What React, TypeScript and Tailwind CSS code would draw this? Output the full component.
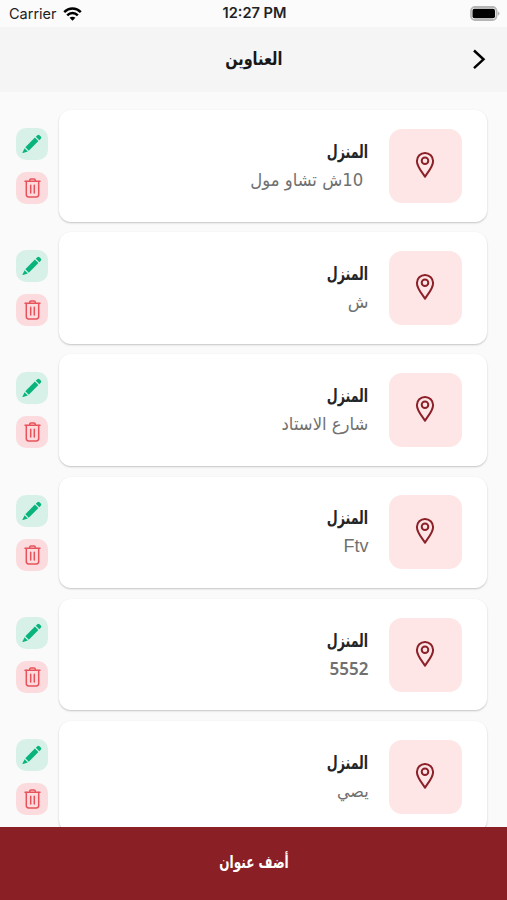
import React from "react";

const addresses = [
  { id: 1, title: "المنزل", detail: "10ش تشاو مول", detailClass: "text-[17.5px] mr-[5px] scale-x-[.94]" },
  { id: 2, title: "المنزل", detail: "ش", detailClass: "text-[17px]" },
  { id: 3, title: "المنزل", detail: "شارع الاستاد", detailClass: "text-[17.5px] scale-x-[.94]" },
  { id: 4, title: "المنزل", detail: "Ftv", detailClass: "text-[18px] font-['Liberation_Sans',sans-serif]" },
  { id: 5, title: "المنزل", detail: "5552", detailClass: "text-[17px] font-semibold font-['Noto_Sans',sans-serif]" },
  { id: 6, title: "المنزل", detail: "يصي", detailClass: "text-[17px] scale-x-[.94]" },
];

function StatusBar() {
  return (
    <div className="grid grid-cols-3 items-center h-[27px] shrink-0 bg-[#fbfbfb] pl-[9px] pr-[7px] font-['Inter',sans-serif] text-[#222]">
      <div className="flex items-center gap-[6px] text-[14.5px]">
        <span>Carrier</span>
        <svg width="19" height="14" viewBox="0 0 19 14" fill="none" stroke="#000" strokeWidth="2.5">
          <path d="M1.2 5.2C6 .4 13 .4 17.8 5.2" />
          <path d="M4.2 8.3c3-3 7.6-3 10.6 0" />
          <path d="M9.5 13.7 6.6 10.8c1.6-1.5 4.2-1.5 5.8 0z" fill="#000" stroke="none" />
        </svg>
      </div>
      <div className="text-center text-[14.6px] font-semibold whitespace-nowrap">12:27 PM</div>
      <div className="flex justify-end">
        <svg width="31" height="15" viewBox="0 0 31 15">
          <rect x="2" y="1" width="25.5" height="13" rx="4" fill="#fbfbfb" stroke="#b5b5b5" strokeWidth="1.8" />
          <rect x="3.500" y="2.800" width="22.500" height="9.400" rx="2" fill="#000" />
          <path d="M28.7 5.300c2.4 1 2.4 3.400 0 4.400z" fill="#b5b5b5" />
        </svg>
      </div>
    </div>
  );
}

function PinIcon() {
  return (
    <svg width="20" height="28" viewBox="0 0 20 28" fill="none" stroke="#8b2028" strokeWidth="2" strokeLinejoin="round">
      <path d="M10 25.600C7.500 21.600 1.900 15.800 1.900 10a8.100 8.100 0 0 1 16.200 0c0 5.800-5.600 11.600-8.100 15.600z" />
      <circle cx="10" cy="9.800" r="3.300" />
    </svg>
  );
}

function PencilIcon() {
  return (
    <svg width="20" height="20" viewBox="0 0 20 20" fill="#08b37c">
      <path d="M3.300 13.200 12.900 3.600l3.500 3.500L6.800 16.700z" />
      <path d="M2.600 14.200 5.800 17.400 1 18.900q-.7.200-.5-.5z" />
      <path d="m13.800 2.700 1.500-1.500q1.100-1 2.200 0l1.300 1.300q1 1.100 0 2.200l-1.500 1.500z" />
    </svg>
  );
}

function TrashIcon() {
  return (
    <svg width="17" height="20" viewBox="0 0 17 20" fill="none" stroke="#e8535b" strokeWidth="1.500" strokeLinecap="round" strokeLinejoin="round">
      <path d="M1 3.300h15" />
      <path d="M5.700 3.100V2.300Q5.700 1 7 1h3q1.300 0 1.300 1.300v.8" />
      <path d="M2.300 3.600v12.900q0 2.400 2.400 2.400h7.600q2.400 0 2.400-2.400V3.600" />
      <path d="M6.700 7.200v7.800M10.300 7.200v7.800" />
    </svg>
  );
}

function AddressRow({ title, detail, detailClass }: { title: string; detail: string; detailClass: string }) {
  return (
    <div className="flex items-start gap-[11px] h-[111.500px] shrink-0">
      <div className="flex items-center gap-5 w-[428px] h-[111.500px] pr-[25px] bg-white rounded-xl shadow-[0_1px_2px_rgba(0,0,0,0.22)]">
        <div className="flex items-center justify-center w-[73.500px] h-[74px] pb-[2px] rounded-[13px] bg-[#fee6e7]">
          <PinIcon />
        </div>
        <div className="flex flex-col items-start">
          <p className="h-7 leading-7 text-[18px] font-bold text-[#252525] origin-right scale-x-[.7]">{title}</p>
          <p className={`h-7 leading-7 text-[#707070] whitespace-nowrap origin-right ${detailClass}`}>{detail}</p>
        </div>
      </div>
      <div className="flex flex-col gap-3 pt-[18px]">
        <button className="flex items-center justify-center w-8 h-8 rounded-[10px] bg-[#d7f1e8]">
          <PencilIcon />
        </button>
        <button className="flex items-center justify-center w-8 h-8 rounded-[10px] bg-[#fbdbdd]">
          <TrashIcon />
        </button>
      </div>
    </div>
  );
}

export default function App() {
  return (
    <div className="flex flex-col w-full h-screen overflow-hidden bg-[#fafafa] font-['DejaVu_Sans',sans-serif]">
      <StatusBar />
      <header dir="rtl" className="grid grid-cols-3 items-center h-[65px] shrink-0 px-[20px] bg-[#f5f5f5]">
        <button className="w-4 pb-[2px]">
          <svg width="16" height="22" viewBox="0 0 16 22" fill="none" stroke="#000" strokeWidth="2.500">
            <path d="m3 2.500 9.500 8.800L3 20.100" />
          </svg>
        </button>
        <h1 className="pb-[2px] text-center text-[18px] font-bold text-[#181818] scale-x-[.8]">العناوين</h1>
      </header>
      <main dir="rtl" className="flex flex-col flex-1 min-h-0 overflow-hidden gap-[10.700px] pt-[18px] pr-5">
        {addresses.map((item) => (
          <AddressRow key={item.id} title={item.title} detail={item.detail} detailClass={item.detailClass} />
        ))}
      </main>
      <button dir="rtl" className="h-[73px] shrink-0 pb-[2px] bg-[#8a2026] text-white">
        <span className="inline-block text-[17px] font-bold scale-x-[.71]">أضف عنوان</span>
      </button>
    </div>
  );
}
